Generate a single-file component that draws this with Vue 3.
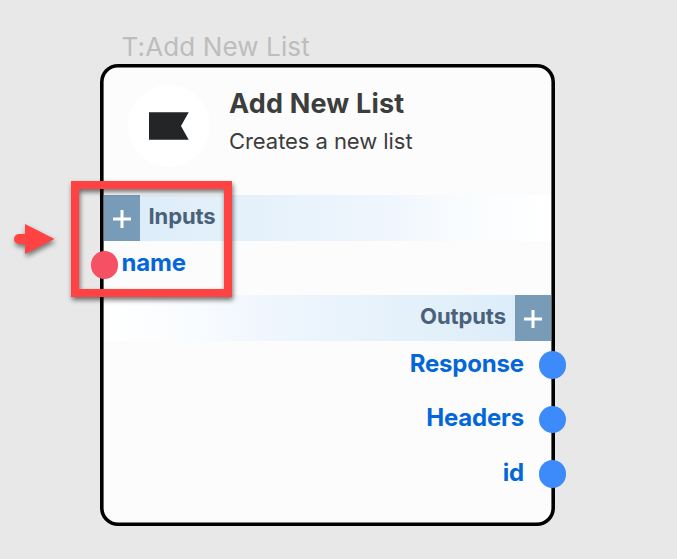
<script setup>
const outputs = ['Response', 'Headers', 'id']
</script>

<template>
  <main class="canvas">
    <div class="caption">T:Add New List</div>
    <section class="node">
      <header class="head">
        <div class="badge">
          <svg width="40" height="28" viewBox="0 0 40 28"><path d="M0 .3H39.7L32 14L39.7 27.7H0Z" fill="#232527" /></svg>
        </div>
        <div class="titles">
          <h1>Add New List</h1>
          <p>Creates a new list</p>
        </div>
      </header>
      <div class="bar inputs">
        <button class="plus"><svg width="18" height="18" viewBox="0 0 18 18"><path d="M9 0V18M0 9H18" stroke="#fff" stroke-width="3" /></svg></button>
        <span>Inputs</span>
      </div>
      <div class="row in"><i class="port red"></i><span>name</span></div>
      <div class="bar outputs">
        <span>Outputs</span>
        <button class="plus"><svg width="18" height="18" viewBox="0 0 18 18"><path d="M9 0V18M0 9H18" stroke="#fff" stroke-width="3" /></svg></button>
      </div>
      <div v-for="name in outputs" :key="name" class="row out"><span>{{ name }}</span><i class="port"></i></div>
    </section>
    <div class="highlight"></div>
    <svg class="arrow" width="60" height="50" viewBox="0 0 60 50">
      <path d="M19 14H25V4L54.5 19L25 34V24H19A5 5 0 0 1 19 14Z" fill="#ff4343" />
    </svg>
  </main>
</template>

<style>
body { background: #e8e8e8; }
</style>

<style scoped>
.canvas {
  position: relative;
  width: 677px;
  height: 559px;
  overflow: hidden;
  background: #e8e8e8;
  font-family: Inter, "Liberation Sans", sans-serif;
}
.caption {
  position: absolute;
  left: 121.5px;
  top: 31px;
  font-size: 26px;
  letter-spacing: .12px;
  line-height: 32px;
  color: #bdbdbd;
  white-space: nowrap;
}
.node {
  position: absolute;
  left: 100px;
  top: 63.5px;
  width: 455.4px;
  height: 462.5px;
  box-sizing: border-box;
  background: #fcfcfc;
  border-radius: 18px;
  box-shadow: inset 0 0 0 3.6px #000;
  padding: 3.5px 4px 3.5px 3.7px;
}
.head {
  height: 128px;
  display: flex;
  align-items: flex-start;
}
.badge {
  width: 82px;
  height: 82px;
  margin: 18px 0 0 24px;
  border-radius: 50%;
  background: #fff;
  display: flex;
  align-items: center;
  justify-content: center;
}
.titles { margin: 20px 0 0 19.3px; white-space: nowrap; }
h1, p { margin: 0; color: #3c3d3d; }
h1 { font-size: 27px; line-height: 34px; font-weight: 700; letter-spacing: .17px; }
p { font-size: 22px; line-height: 28px; margin-top: 6px; letter-spacing: -.06px; }
.bar {
  height: 45.5px;
  display: flex;
  align-items: center;
  color: #4a617b;
  font-size: 22px;
  font-weight: 700;
  letter-spacing: -.1px;
}
.bar span { position: relative; top: -2px; }
.inputs { background: linear-gradient(90deg, #d9ebf9, #e4f1fa 30%, #eef5fd 61%, #f9fcfe 80%, #fff); }
.outputs { justify-content: flex-end; background: linear-gradient(270deg, #d9ebf9, #e4f1fa 30%, #eef5fd 61%, #f9fcfe 80%, #fff); }
.inputs span { margin-left: 8.3px; }
.outputs span { margin-right: 9px; }
.plus {
  width: 36.5px;
  height: 45.5px;
  padding: 2px 0 0;
  border: 0;
  background: #789bb7;
  display: flex;
  align-items: center;
  justify-content: center;
}
.row {
  height: 54.5px;
  display: flex;
  align-items: center;
  color: #0467d9;
  font-size: 24px;
  font-weight: 700;
  letter-spacing: -.2px;
}
.row span { position: relative; top: -1.5px; }
.out { justify-content: flex-end; height: 54.6px; position: relative; top: -3px; }
.port {
  width: 27.5px;
  height: 27.5px;
  border-radius: 50%;
  background: #3d8bfb;
  flex: none;
}
.out .port { margin: 0 -15px 0 15px; }
.red { background: #f55064; margin: 0 3.3px 0 -13px; }
.in { padding-bottom: 6px; box-sizing: border-box; }
.in span { top: -2px; }
.highlight {
  position: absolute;
  left: 71px;
  top: 181px;
  width: 161px;
  height: 116px;
  box-sizing: border-box;
  border: 8px solid #ff4343;
  filter: drop-shadow(1px 3px 2.5px rgba(0, 0, 0, .55));
}
.arrow {
  position: absolute;
  left: 0;
  top: 220px;
  filter: drop-shadow(1px 3px 2.5px rgba(0, 0, 0, .5));
}
</style>
